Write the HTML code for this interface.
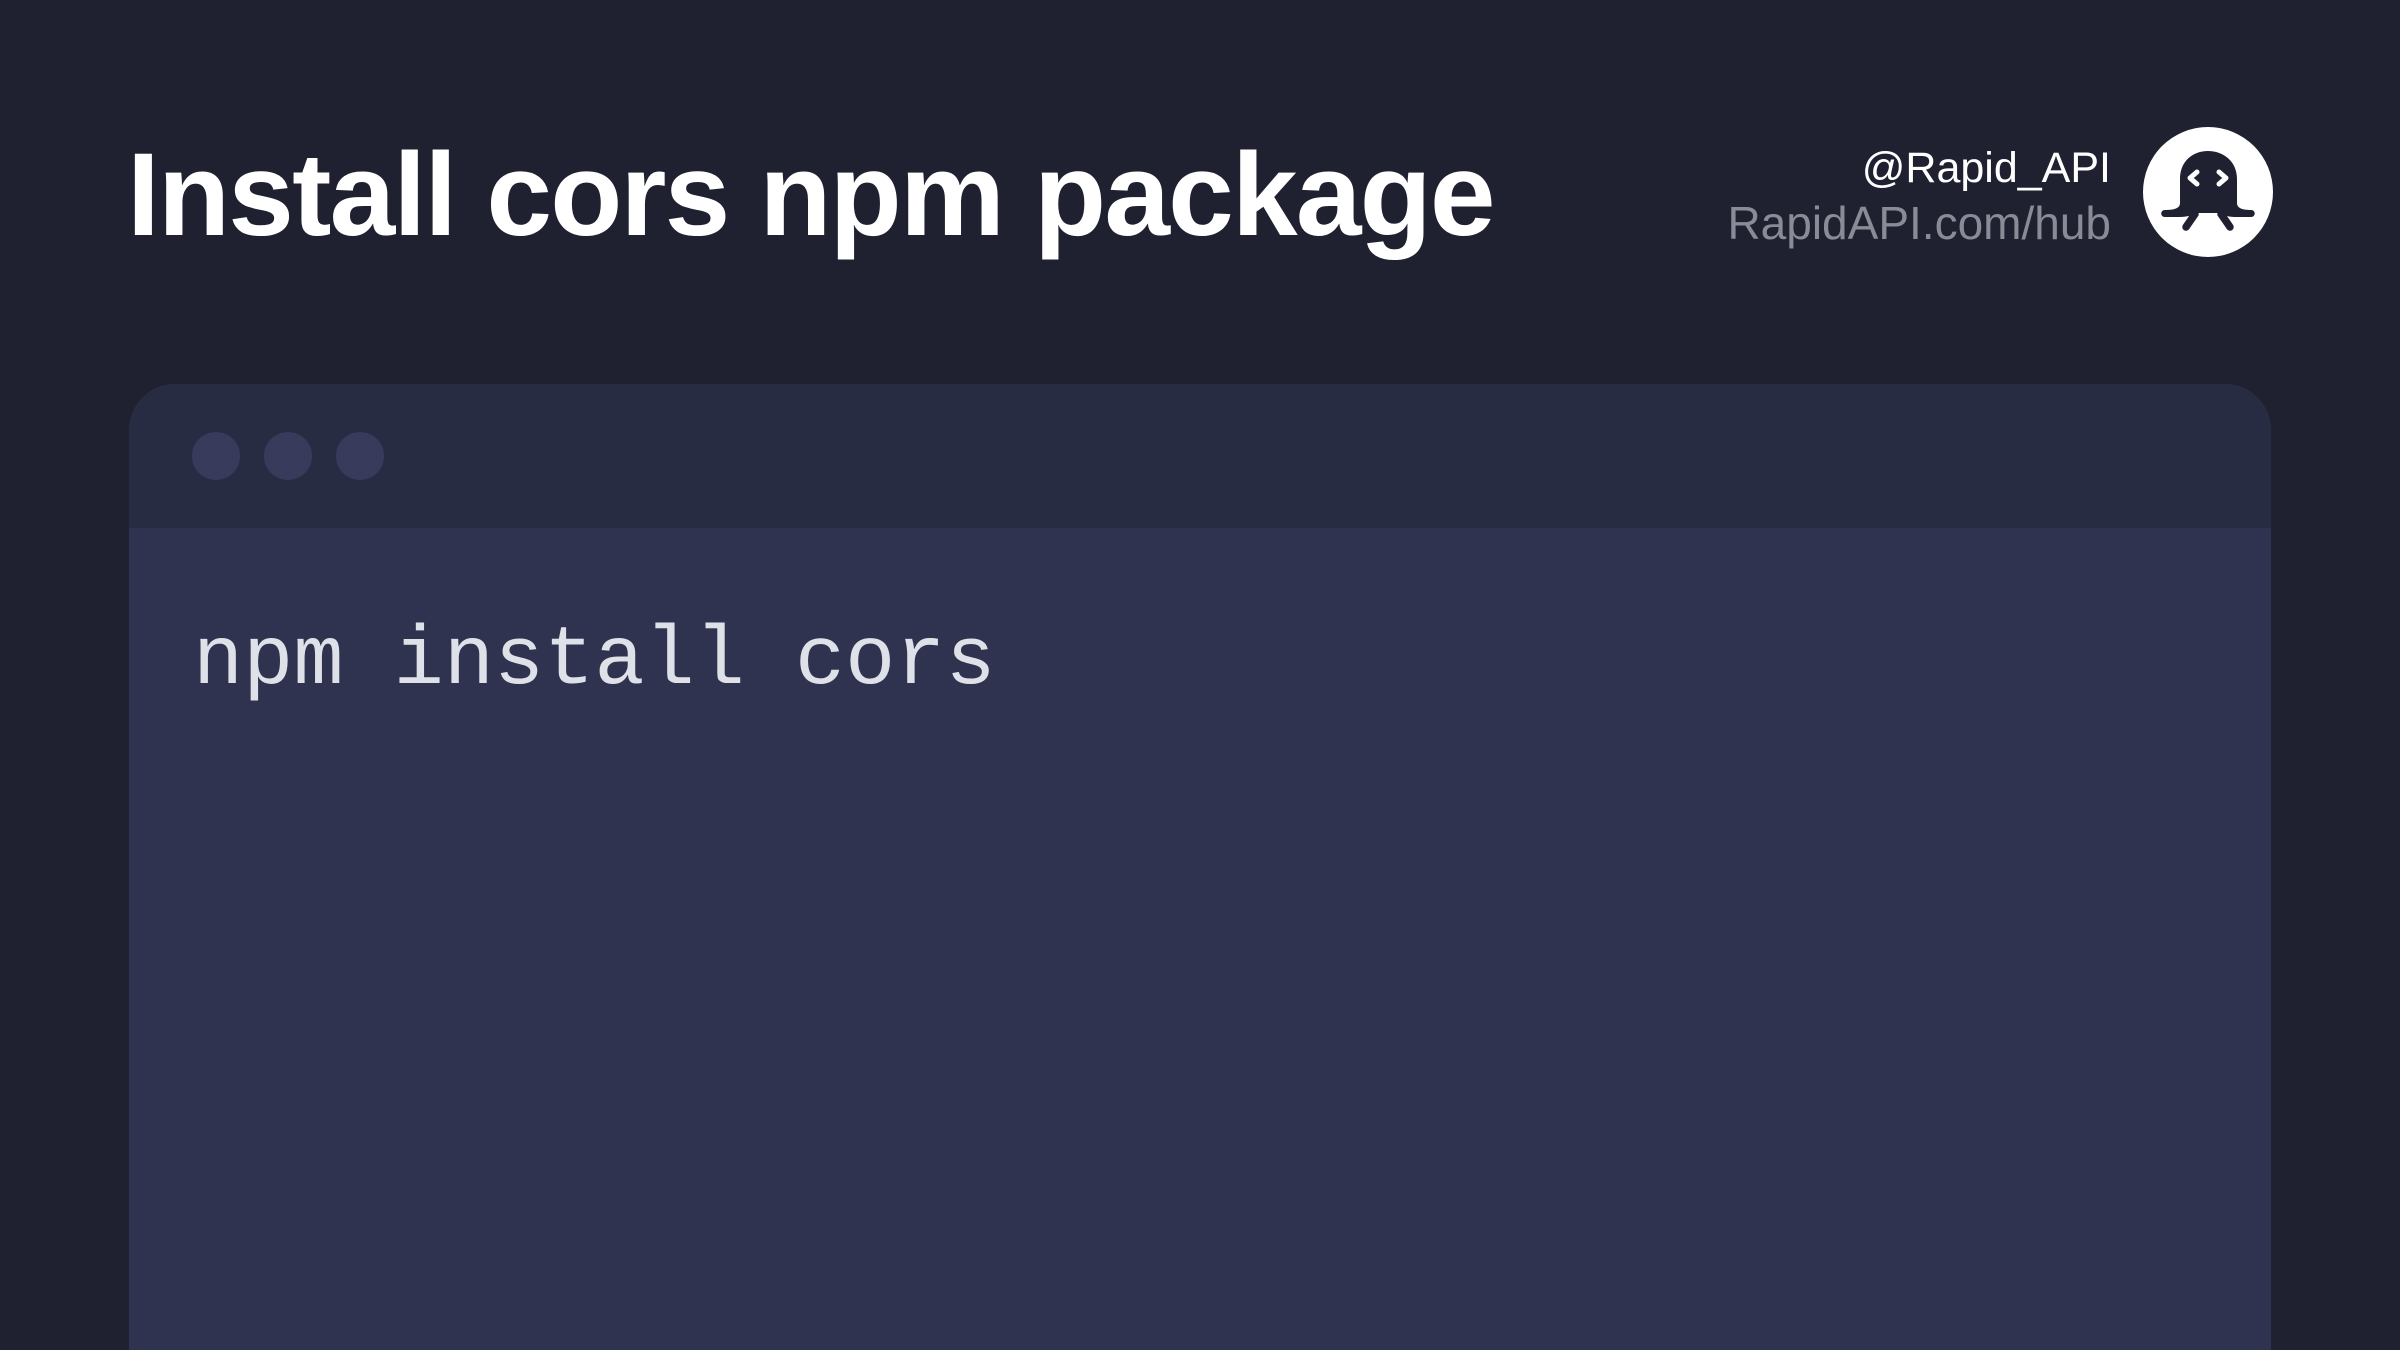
<!DOCTYPE html>
<html><head><meta charset="utf-8"><style>
html,body{margin:0;padding:0;overflow:hidden;width:2400px;height:1350px}
body{background:#1f2030;position:relative;font-family:"Liberation Sans",sans-serif}
.title{position:absolute;left:127px;top:136px;font-size:118px;font-weight:bold;color:#fff;line-height:1;white-space:nowrap;letter-spacing:-1.8px}
.r1,.r2{position:absolute;right:289px;line-height:1;white-space:nowrap}
.r1{top:147px;color:#fff;font-size:43px}
.r2{top:200px;color:#8a8b96;font-size:46px}
.card{position:absolute;left:129px;top:384px;width:2142px;height:966px;border-radius:46px 46px 0 0;background:#2f3350;overflow:hidden}
.hdr{height:144px;background:#282c42;position:relative}
.dot{position:absolute;top:432px;width:48px;height:48px;border-radius:50%;background:#383b5c}
.code{position:absolute;left:193px;top:620px;font-family:"Liberation Mono",monospace;font-size:83.6px;color:#dfe1e8;line-height:1;white-space:pre}
</style></head><body>
<div class="title">Install cors npm package</div>
<div class="r1">@Rapid_API</div>
<div class="r2">RapidAPI.com/hub</div>
<svg style="position:absolute;left:2140px;top:125px" width="135" height="135" viewBox="0 0 135 135">
<circle cx="68" cy="67" r="65" fill="#fff"/>
<path d="M40 78 V54 C40 36 53 26 68 26 C83 26 97 36 97 54 V78 C97 83 102 85 111 85 C116 85 116 92 111 92 L95 92 C88 92 82 90 80 88 L56 88 C53 90 47 92 40 92 L25 92 C20 92 20 85 25 85 C35 85 40 83 40 78 Z" fill="#1f2030"/>
<path d="M55 89 L46 102 M81 89 L90 102" stroke="#1f2030" stroke-width="7.5" stroke-linecap="round"/>
<path d="M57 47 L50 53 L57 59 M79 47 L86 53 L79 59" stroke="#fff" stroke-width="5" fill="none" stroke-linecap="round" stroke-linejoin="round"/>
</svg>
<div class="card"><div class="hdr"></div></div>
<div class="dot" style="left:192px"></div>
<div class="dot" style="left:264px"></div>
<div class="dot" style="left:336px"></div>
<div class="code">npm install cors</div>
</body></html>
